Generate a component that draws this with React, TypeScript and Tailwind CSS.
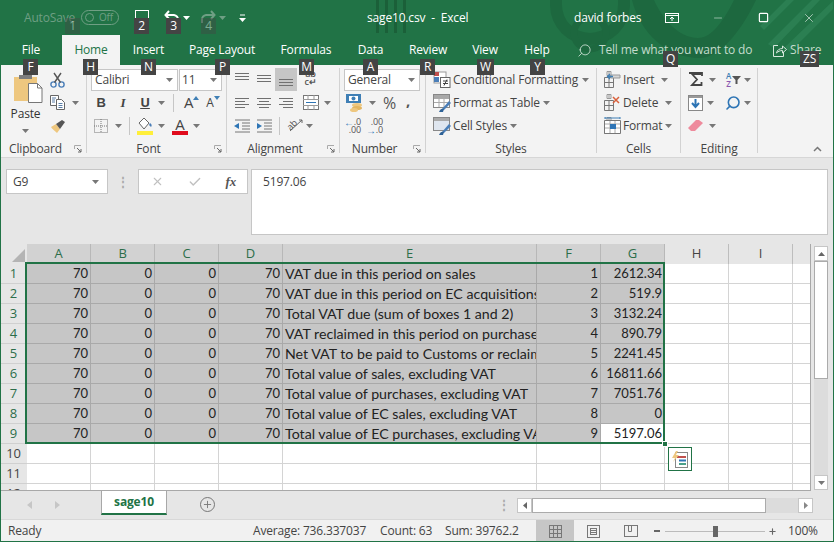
import React from "react";
import { X, Check, Search, Minus, Square, Plus } from "lucide-react";

const LABEL = "font-['Open_Sans',sans-serif] tracking-[-0.17px]";

const colHeads = [
  { t: "A", sel: true },
  { t: "B", sel: true },
  { t: "C", sel: true },
  { t: "D", sel: true },
  { t: "E", sel: true },
  { t: "F", sel: true },
  { t: "G", sel: true },
  { t: "H", sel: false },
  { t: "I", sel: false },
  { t: "", sel: false },
];

const rows = [
  ["VAT due in this period on sales", "1", "2612.34"],
  ["VAT due in this period on EC acquisitions", "2", "519.9"],
  ["Total VAT due (sum of boxes 1 and 2)", "3", "3132.24"],
  ["VAT reclaimed in this period on purchases", "4", "890.79"],
  ["Net VAT to be paid to Customs or reclaimed", "5", "2241.45"],
  ["Total value of sales, excluding VAT", "6", "16811.66"],
  ["Total value of purchases, excluding VAT", "7", "7051.76"],
  ["Total value of EC sales, excluding VAT", "8", "0"],
  ["Total value of EC purchases, excluding VAT", "9", "5197.06"],
];

const GRID = "grid grid-cols-[27px_64px_64px_64px_64px_254px_64px_64px_64px_64px_18px]";

function Caret({ className = "" }: { className?: string }) {
  return (
    <svg width="7" height="4" viewBox="0 0 7 4" className={className}>
      <path d="M0 0h7L3.5 4z" fill="#777" />
    </svg>
  );
}

// each line is [from, to], three pixels apart, starting at y
function Lines({ rows, y = 0, color = "#707070" }: { rows: [number, number][]; y?: number; color?: string }) {
  return (
    <svg width="16" height="13" viewBox="0 0 16 13">
      {rows.map(([a, b], i) => (
        <rect key={i} x={a} y={y + i * 3} width={b - a} height="1" fill={color} />
      ))}
    </svg>
  );
}

function Launcher() {
  return (
    <svg width="8" height="8" viewBox="0 0 8 8" className="absolute right-[4px] bottom-0">
      <path d="M.5 4V.5H7" fill="none" stroke="#aaa" />
      <path d="M3 3l4 4M7 4v3H4" fill="none" stroke="#666" />
    </svg>
  );
}

function Group({
  w,
  label,
  launcher,
  children,
}: {
  w: string;
  label: string;
  launcher?: boolean;
  children: React.ReactNode;
}) {
  return (
    <div className={`${w} relative flex flex-col shrink-0 mt-[3px] mb-[4px] border-r border-[#d2d2d2]`}>
      <div className="h-[73px] shrink-0">{children}</div>
      <div
        className={`h-[16px] shrink-0 flex items-center justify-center text-[12px] text-[#444] ${launcher ? "pr-[16px]" : ""}`}
      >
        {label}
      </div>
      {launcher && <Launcher />}
    </div>
  );
}

function Row({ className = "", children }: { className?: string; children: React.ReactNode }) {
  return <div className={`h-[23px] flex items-center ${className}`}>{children}</div>;
}

function PasteIcon() {
  return (
    <svg width="29" height="28" viewBox="0 0 29 28">
      <rect x="0" y="2" width="23" height="24" fill="#eec77f" />
      <rect x="5" y="0" width="13" height="4" fill="#7d7d7d" />
      <path d="M14.5 8.5h9l4.5 4.5v14.5h-13.5z" fill="#fff" stroke="#777" />
      <path d="M23.5 8.5V13H28" fill="none" stroke="#777" />
    </svg>
  );
}

function Scissors() {
  return (
    <svg width="16" height="16" viewBox="0 0 16 16">
      <circle cx="3.5" cy="12.5" r="2.6" fill="none" stroke="#4a7eb8" strokeWidth="1.4" />
      <circle cx="11.5" cy="12.5" r="2.6" fill="none" stroke="#4a7eb8" strokeWidth="1.4" />
      <path d="M4.5 10.5L11 1M10.5 10.5L4 1" stroke="#555" strokeWidth="1.4" />
    </svg>
  );
}

function CopyIcon() {
  return (
    <svg width="16" height="15" viewBox="0 0 16 15" fill="none" stroke="#666">
      <path d="M.5.5h8v10h-8z" fill="#fff" />
      <path d="M6.5 4.5h5l3 3v7h-8z" fill="#fff" />
      <path d="M2 3h4M2 5h3M2 7h3M8.5 8.5h4M8.5 10.5h4M8.5 12.5h4" stroke="#5a7fa8" />
    </svg>
  );
}

function Brush() {
  return (
    <svg width="16" height="14" viewBox="0 0 16 14">
      <path d="M1 8l5-3 4 5-3 4C5 12 2 10 1 8z" fill="#eec77f" />
      <path d="M6 5l6-4 3 2-5 7z" fill="#555" />
    </svg>
  );
}

function BorderIcon() {
  return (
    <svg width="14" height="14" viewBox="0 0 14 14" fill="none" stroke="#777" strokeDasharray="1 1">
      <rect x=".5" y=".5" width="13" height="13" />
      <path d="M7 0v14M0 7h14" />
    </svg>
  );
}

function FillIcon() {
  return (
    <svg width="16" height="18" viewBox="0 0 16 18">
      <path d="M2 6l5-5 5 5-5 6z" fill="#fff" stroke="#666" />
      <path d="M13 6c2 1 2 3 1 4l-2-2z" fill="#4a7eb8" />
      <rect x="0" y="14" width="16" height="4" fill="#ffef3a" />
    </svg>
  );
}

function FontColor() {
  return (
    <div className="relative w-[16px] h-[18px] flex flex-col items-center">
      <span className="text-[15px] leading-[14px] text-[#444]">A</span>
      <span className="absolute bottom-0 w-[16px] h-[4px] bg-[#e00b1c]" />
    </div>
  );
}

function Money() {
  return (
    <svg width="17" height="18" viewBox="0 0 17 18">
      <rect x="0" y="0" width="15" height="9" fill="#3f7fb5" />
      <rect x="3" y="2" width="9" height="5" fill="#fff" />
      <circle cx="7.5" cy="4.5" r="2" fill="#3f7fb5" />
      <ellipse cx="11" cy="11" rx="5" ry="2" fill="#eec77f" />
      <ellipse cx="11" cy="14" rx="5" ry="2" fill="#e4b661" />
      <ellipse cx="8" cy="16" rx="4" ry="2" fill="#eec77f" />
    </svg>
  );
}

function CondFmt() {
  return (
    <svg width="18" height="17" viewBox="0 0 18 17">
      <rect x="1" y="1" width="12" height="11" fill="#fff" stroke="#999" />
      <rect x="1" y="1" width="5" height="4" fill="#c0504d" />
      <rect x="1" y="6" width="5" height="5" fill="#4a7eb8" />
      <rect x="7.5" y="6.5" width="9.5" height="10" fill="#fff" stroke="#666" />
      <path d="M10 10h5M10 12.5h5M14 8.5l-3 6" stroke="#444" fill="none" />
    </svg>
  );
}

function TableFmt({ light }: { light?: boolean }) {
  return (
    <svg width="19" height="18" viewBox="0 0 19 18">
      <rect x=".5" y=".5" width="16" height="13" fill={light ? "#dfe6ef" : "#fff"} stroke="#888" />
      {!light && <path d="M1 4.5h15M1 8.5h15M6 1v12M11 1v12" stroke="#aaa" />}
      <rect x="1" y="1" width="15" height="3" fill="#a9a9a9" />
      <path d="M9 15l7-8 2 2-7 7z" fill="#4a7eb8" />
      <path d="M6 18c1-3 3-4 5-3l-1 3z" fill="#2e6296" />
    </svg>
  );
}

function CellsIcon({ kind }: { kind: "insert" | "delete" | "format" }) {
  return (
    <svg width="17" height="17" viewBox="0 0 17 17" fill="none">
      <path d="M.5 6.5h9v10h-9zM.5 11.5h9M5 6.5v10" stroke="#777" />
      <path d="M3 .5h4v4H3zM5 0v5" stroke="#999" />
      {kind === "insert" && (
        <>
          <path d="M7 4h9v3H7z" fill="#d6d6d6" stroke="#999" />
          <path d="M9 5.5H4M6 3L3.5 5.5 6 8" stroke="#3f7fb5" strokeWidth="1.3" />
        </>
      )}
      {kind === "delete" && <path d="M9 3l6 6M15 3l-6 6" stroke="#d9603b" strokeWidth="1.5" />}
      {kind === "format" && (
        <>
          <path d="M.5 3.5h16v13H.5z" fill="#fff" stroke="#777" />
          <path d="M1 7h15M1 11h15M6 4v12M11 4v12" stroke="#aaa" />
          <rect x="6" y="7" width="6" height="5" fill="#2f75b5" />
          <path d="M1 1h15M1 0v2M16 0v2" stroke="#3f7fb5" />
        </>
      )}
    </svg>
  );
}

function Sigma() {
  return (
    <svg width="15" height="15" viewBox="0 0 15 15">
      <path d="M1 1h13v3M13 2H4l5 5.5L4 13h9.5V10" fill="none" stroke="#444" strokeWidth="1.8" />
    </svg>
  );
}

function SortFilter() {
  return (
    <div className="flex items-center">
      <div className="flex flex-col items-center text-[8px] leading-[8px] font-semibold">
        <span className="text-[#3f7fb5]">A</span>
        <span className="text-[#8a57b0]">Z</span>
      </div>
      <svg width="9" height="8" viewBox="0 0 9 8" className="ml-[1px]">
        <path d="M0 0h9L5.5 4v4h-2V4z" fill="#555" />
      </svg>
    </div>
  );
}

function FillDown() {
  return (
    <svg width="15" height="16" viewBox="0 0 15 16">
      <rect x=".5" y=".5" width="14" height="15" fill="#fff" stroke="#888" />
      <rect x="1" y="1" width="13" height="2" fill="#999" />
      <path d="M7.5 4v7M4 8l3.5 4L11 8" fill="none" stroke="#2e75b5" strokeWidth="2" />
    </svg>
  );
}

function Eraser() {
  return (
    <svg width="15" height="13" viewBox="0 0 15 13">
      <path d="M0 9l8-8h3l4 3-8 8H3z" fill="#ee8a9c" />
    </svg>
  );
}

function Wrap() {
  return (
    <div className="flex flex-col items-center text-[9px] leading-[8px] text-[#555] font-semibold mb-[4px]">
      <span>ab</span>
      <span>c↵</span>
    </div>
  );
}

function Ribbon() {
  return (
    <div className={`h-[93px] flex bg-[#f3f3f3] border-b border-[#d6d6d6] pl-[1px] ${LABEL}`}>
      <Group w="w-[86px]" label="Clipboard" launcher>
        <div className="flex">
          <div className="w-[49px] flex flex-col items-center pt-[7px]">
            <span className="ml-[5px]"><PasteIcon /></span>
            <span className="text-[12px] leading-[16px] text-[#333] mt-[3px]">Paste</span>
            <Caret className="mt-[7px]" />
          </div>
          <div className="flex flex-col">
            <Row><Scissors /></Row>
            <Row>
              <CopyIcon />
              <Caret className="ml-[6px]" />
            </Row>
            <Row><Brush /></Row>
          </div>
        </div>
      </Group>

      <Group w="w-[140px]" label="Font" launcher>
        <div className="pl-[4px] h-[23px] flex gap-[1px] pt-[1px]">
          <div className="w-[87px] h-[22px] bg-white border border-[#c6c6c6] flex items-center justify-between pl-[3px] pr-[4px] text-[12px] text-[#444]">
            Calibri
            <Caret />
          </div>
          <div className="w-[43px] h-[22px] bg-white border border-[#c6c6c6] flex items-center justify-between pl-[2px] pr-[4px] text-[12px] text-[#444]">
            11
            <Caret />
          </div>
        </div>
        <Row className="pl-[6px] text-[#444] text-[13px]">
          <span className="w-[16px] text-center font-bold font-['Liberation_Sans',sans-serif]">B</span>
          <span className="w-[16px] ml-[6px] text-center italic font-['Liberation_Serif',serif] font-bold">I</span>
          <span className="w-[16px] ml-[6px] text-center underline font-bold">U</span>
          <Caret className="ml-[5px]" />
          <span className="w-px h-[18px] bg-[#c6c6c6] ml-[8px]" />
          <span className="text-[15px] ml-[10px]">A</span>
          <svg width="6" height="4" viewBox="0 0 6 4" className="mb-[9px]"><path d="M0 4l3-4 3 4z" fill="#3f7fb5" /></svg>
          <span className="text-[12px] ml-[7px]">A</span>
          <svg width="6" height="4" viewBox="0 0 6 4" className="mb-[9px]"><path d="M0 0l3 4 3-4z" fill="#3f7fb5" /></svg>
        </Row>
        <Row className="pl-[7px]">
          <BorderIcon />
          <Caret className="ml-[7px]" />
          <span className="w-px h-[18px] bg-[#c6c6c6] ml-[7px]" />
          <span className="ml-[7px]"><FillIcon /></span>
          <Caret className="ml-[5px]" />
          <span className="ml-[7px]"><FontColor /></span>
          <Caret className="ml-[5px]" />
        </Row>
      </Group>

      <Group w="w-[113px]" label="Alignment" launcher>
        <Row className="pl-[7px]">
          <Lines rows={[[1, 15], [1, 15], [1, 15]]} y={0} />
          <span className="ml-[6px]"><Lines rows={[[1, 15], [1, 15], [1, 15]]} y={2} /></span>
          <span className="w-[22px] h-[23px] ml-[3px] bg-[#c6c6c6] flex items-center justify-center">
            <Lines rows={[[1, 15], [1, 15], [1, 15]]} y={6} />
          </span>
          <span className="ml-[5px] w-[17px] flex justify-center"><Wrap /></span>
        </Row>
        <Row className="pl-[7px]">
          <Lines rows={[[1, 15], [1, 11], [1, 15], [1, 11]]} y={2} />
          <span className="ml-[6px]"><Lines rows={[[1, 15], [3, 13], [1, 15], [3, 13]]} y={2} /></span>
          <span className="ml-[6px]"><Lines rows={[[1, 15], [5, 15], [1, 15], [5, 15]]} y={2} /></span>
          <svg width="16" height="15" viewBox="0 0 16 15" className="ml-[9px]" fill="none">
            <rect x=".5" y=".5" width="15" height="14" fill="#fff" stroke="#777" />
            <path d="M0 4.5h16M0 10.5h16M5 0v4M11 0v4M5 11v4M11 11v4" stroke="#999" />
            <path d="M3 7.5h10" stroke="#2e75b5" />
          </svg>
          <Caret className="ml-[5px]" />
        </Row>
        <Row className="pl-[7px]">
          <svg width="16" height="14" viewBox="0 0 16 14">
            <path d="M1 1h15M8 4h8M8 7h8M8 10h8M1 13h15" stroke="#777" />
            <path d="M0 7l5-3v6z" fill="#2e75b5" />
          </svg>
          <svg width="16" height="14" viewBox="0 0 16 14" className="ml-[6px]">
            <path d="M1 1h15M8 4h8M8 7h8M8 10h8M1 13h15" stroke="#777" />
            <path d="M6 7L1 4v6z" fill="#2e75b5" />
          </svg>
          <span className="w-px h-[18px] bg-[#c6c6c6] ml-[7px]" />
          <svg width="17" height="17" viewBox="0 0 17 17" className="ml-[7px]" fill="none">
            <path d="M3 14L15 3M12 3h3v3" stroke="#666" />
            <text x="0" y="11" fontSize="9" fill="#555" transform="rotate(-45 5 8)">ab</text>
          </svg>
          <Caret className="ml-[2px]" />
        </Row>
      </Group>

      <Group w="w-[86px]" label="Number" launcher>
        <div className="pl-[4px] h-[23px] pt-[1px]">
          <div className="w-[76px] h-[22px] bg-white border border-[#c6c6c6] flex items-center justify-between pl-[3px] pr-[4px] text-[12px] text-[#444]">
            General
            <Caret />
          </div>
        </div>
        <Row className="pl-[6px] text-[#555]">
          <Money />
          <Caret className="ml-[6px]" />
          <span className="text-[16px] ml-[7px]">%</span>
          <span className="text-[15px] font-bold ml-[10px] mb-[4px]">,</span>
        </Row>
        <Row className="pl-[6px] text-[9px] leading-[8px] text-[#555]">
          <div className="w-[15px] flex flex-col items-end">
            <span className="flex items-center"><span className="text-[#2e75b5] text-[10px] leading-[8px]">←</span>.0</span>
            <span>.00</span>
          </div>
          <div className="w-[15px] ml-[7px] flex flex-col items-end">
            <span>.00</span>
            <span className="flex items-center"><span className="text-[#2e75b5] text-[10px] leading-[8px]">→</span>.0</span>
          </div>
        </Row>
      </Group>

      <Group w="w-[171px]" label="Styles">
        <div className="pl-[7px] text-[12px] text-[#444]">
          <Row>
            <CondFmt />
            <span className="ml-[2px]">Conditional Formatting</span>
            <Caret className="ml-[4px]" />
          </Row>
          <Row>
            <TableFmt />
            <span className="ml-[1px]">Format as Table</span>
            <Caret className="ml-[3px]" />
          </Row>
          <Row>
            <TableFmt light />
            <span className="ml-[1px]">Cell Styles</span>
            <Caret className="ml-[3px]" />
          </Row>
        </div>
      </Group>

      <Group w="w-[84px]" label="Cells">
        <div className="pl-[7px] text-[12px] text-[#444]">
          <Row>
            <CellsIcon kind="insert" />
            <span className="ml-[2px] w-[35px]">Insert</span>
            <Caret className="ml-[3px]" />
          </Row>
          <Row>
            <CellsIcon kind="delete" />
            <span className="ml-[2px] w-[39px]">Delete</span>
            <Caret className="ml-[3px]" />
          </Row>
          <Row>
            <CellsIcon kind="format" />
            <span className="ml-[2px]">Format</span>
            <Caret className="ml-[3px]" />
          </Row>
        </div>
      </Group>

      <Group w="w-[77px]" label="Editing">
        <Row className="pl-[7px]">
          <Sigma />
          <Caret className="ml-[6px]" />
          <span className="ml-[10px]"><SortFilter /></span>
          <Caret className="ml-[3px]" />
        </Row>
        <Row className="pl-[7px]">
          <FillDown />
          <Caret className="ml-[4px]" />
          <Search size={16} strokeWidth={2.4} className="ml-[11px] text-[#2e75b5] -scale-x-100" />
          <Caret className="ml-[3px]" />
        </Row>
        <Row className="pl-[7px]">
          <Eraser />
          <Caret className="ml-[6px]" />
        </Row>
      </Group>

      <div className="flex-1 relative">
        <svg width="9" height="6" viewBox="0 0 9 6" className="absolute right-[12px] bottom-[5px]" fill="none">
          <path d="M1 5l3.5-3.5L8 5" stroke="#777" strokeWidth="1.5" />
        </svg>
      </div>
    </div>
  );
}

const tabs = [
  { t: "File", w: "w-[62px]", c: "" },
  { t: "Home", w: "w-[58px]", c: "bg-[#f3f3f3] text-[#217346]" },
  { t: "Insert", w: "w-[57px]", c: "" },
  { t: "Page Layout", w: "w-[90px]", c: "" },
  { t: "Formulas", w: "w-[78px]", c: "" },
  { t: "Data", w: "w-[51px]", c: "" },
  { t: "Review", w: "w-[64px]", c: "" },
  { t: "View", w: "w-[50px]", c: "" },
  { t: "Help", w: "w-[54px]", c: "" },
];

const keyTips = [
  { t: "F", c: "left-[23px] top-[59px] w-[15px]" },
  { t: "H", c: "left-[83px] top-[59px] w-[15px]" },
  { t: "N", c: "left-[141px] top-[59px] w-[15px]" },
  { t: "P", c: "left-[215px] top-[59px] w-[15px]" },
  { t: "M", c: "left-[299px] top-[59px] w-[15px]" },
  { t: "A", c: "left-[363px] top-[59px] w-[15px]" },
  { t: "R", c: "left-[420px] top-[59px] w-[15px]" },
  { t: "W", c: "left-[477px] top-[59px] w-[17px]" },
  { t: "Y", c: "left-[530px] top-[59px] w-[15px]" },
  { t: "Q", c: "left-[663px] top-[51px] w-[15px]" },
  { t: "ZS", c: "left-[800px] top-[51px] w-[19px]" },
  { t: "1", c: "left-[65px] top-[18px] w-[15px] opacity-40" },
  { t: "2", c: "left-[134px] top-[18px] w-[15px]" },
  { t: "3", c: "left-[166px] top-[18px] w-[15px]" },
  { t: "4", c: "left-[201px] top-[18px] w-[15px] opacity-40" },
];

function TitleBar() {
  return (
    <div className={`relative h-[65px] bg-[#217346] text-white text-[12px] ${LABEL}`}>
      <svg width="834" height="65" viewBox="0 0 834 65" className="absolute left-0 top-0">
        <path d="M376 0h3v33h-3zM385 0h3v33h-3zM394 0h3v33h-3zM403 0h3v33h-3z" fill="#1b6039" />
        <path d="M550 0v5a40 40 0 0 0 80 0V0h-12v5a28 28 0 0 1-56 0V0z" fill="#1d683f" />
        <circle cx="590" cy="33" r="16" fill="none" stroke="#1d683f" strokeWidth="7" />
        <path d="M632 0c8 32 34 58 68 58 18 0 40-24 56-58h-22c-10 20-22 38-36 38-20 0-36-20-44-38z" fill="#1d683f" />
        <path d="M768 44L812 0h8l-46 48zM784 48L834 0v8l-44 44zM760 26L786 0h8l-30 30z" fill="#2b7f52" />
      </svg>
      <div className="relative h-[35px] flex items-center whitespace-nowrap">
        <div className="w-[24px] shrink-0" />
        <span className="w-[57px] shrink-0 text-[#6f9f84]">AutoSave</span>
        <div className="w-[38px] h-[15px] shrink-0 rounded-full border border-[#6f9f84] flex items-center pl-[3px] gap-[5px] text-[10px] text-[#6f9f84]">
          <span className="w-[9px] h-[9px] rounded-full border border-[#6f9f84]" />
          Off
        </div>
        <div className="w-[16px] shrink-0" />
        <div className="w-[14px] h-[14px] shrink-0 border-[1.5px] border-white mb-[2px]" />
        <div className="w-[15px] shrink-0" />
        <svg width="16" height="14" viewBox="0 0 16 14" fill="none" className="mb-[2px] shrink-0">
          <path d="M2 5h8a4.5 4.5 0 0 1 4 5v3M5 1L1.5 5 5 9" stroke="#fff" strokeWidth="2" />
        </svg>
        <Caret className="ml-[3px] shrink-0 [&_path]:fill-white" />
        <svg width="16" height="14" viewBox="0 0 16 14" fill="none" className="ml-[10px] mb-[2px] shrink-0">
          <path d="M14 5H6a4.5 4.5 0 0 0-4 5v3M11 1l3.5 4L11 9" stroke="#6f9f84" strokeWidth="2" />
        </svg>
        <Caret className="ml-[3px] shrink-0 [&_path]:fill-[#6f9f84]" />
        <svg width="7" height="8" viewBox="0 0 7 8" className="ml-[13px] shrink-0">
          <path d="M1 1h5" stroke="#fff" />
          <path d="M0 4h7L3.5 8z" fill="#fff" />
        </svg>
        <span className="ml-[121px] w-[99px] shrink-0 text-center whitespace-pre">sage10.csv  -  Excel</span>
        <span className="ml-[108px] w-[66px] shrink-0 text-center">david forbes</span>
        <svg width="14" height="10" viewBox="0 0 14 10" className="ml-[25px] shrink-0" fill="none">
          <rect x=".5" y=".5" width="13" height="9" stroke="#fff" />
          <path d="M0 2.5h14" stroke="#fff" />
          <path d="M7 8V4M5 6l2-2 2 2" stroke="#fff" />
        </svg>
        <Minus size={12} strokeWidth={1} className="ml-[33px] shrink-0" />
        <Square size={11} strokeWidth={1.2} className="ml-[34px] shrink-0" absoluteStrokeWidth />
        <X size={14} strokeWidth={1} className="ml-[33px] shrink-0" />
      </div>
      <div className="relative h-[30px] flex items-center whitespace-nowrap">
        {tabs.map((t) => (
          <div key={t.t} className={`${t.w} ${t.c} h-[30px] shrink-0 flex items-center justify-center`}>
            {t.t}
          </div>
        ))}
        <Search size={15} strokeWidth={1.3} className="ml-[13px] -scale-x-100 text-[#d8e8de] shrink-0" />
        <span className="ml-[7px] w-[151px] shrink-0 text-[#c4dccd]">Tell me what you want to do</span>
        <svg width="14" height="13" viewBox="0 0 14 13" fill="none" className="ml-[23px] shrink-0" stroke="#d8e8de">
          <path d="M5 1.5H.5v11h10V8" />
          <path d="M3.5 9c.5-3 3-4.5 6-4.5V2l4 3.5-4 3.5V6.5c-2.500 0-4.500 1-6 2.500z" />
        </svg>
        <span className="ml-[3px] text-[#c4dccd]">Share</span>
      </div>
    </div>
  );
}

function FormulaBar() {
  return (
    <div className={`h-[86px] bg-[#e6e6e6] flex pt-[11px] pl-[6px] text-[12px] text-[#444] ${LABEL}`}>
      <div className="w-[102px] h-[25px] bg-white border border-[#c6c6c6] flex items-center justify-between pl-[6px] pr-[8px]">
        G9
        <Caret />
      </div>
      <div className="w-[30px] h-[25px] flex items-center justify-center text-[#aaa] font-bold">⋮</div>
      <div className="w-[110px] h-[25px] bg-white border border-[#c6c6c6] flex items-center justify-between pl-[12px] pr-[11px]">
        <X size={13} className="text-[#c0c0c0]" strokeWidth={2} />
        <Check size={14} className="text-[#c0c0c0]" strokeWidth={2.4} />
        <span className="font-['Liberation_Serif',serif] italic font-bold text-[#555] text-[13px]">fx</span>
      </div>
      <div className="ml-[3px] w-[577px] h-[66px] bg-white border border-[#c6c6c6] pl-[11px] pt-[3px] text-[12px]">5197.06</div>
    </div>
  );
}

function Sheet() {
  return (
    <div className="relative h-[247px] flex overflow-hidden font-['Lato',sans-serif] text-[14.2px] text-[#222] bg-[#e6e6e6]">
      <div className="w-[811px] shrink-0 border-r border-b border-[#a8a8a8] overflow-hidden bg-white">
        <div className={GRID}>
          <div className="h-[20px] bg-[#e6e6e6] flex items-end justify-end pr-[2px] pb-[2px]">
            <svg width="13" height="13" viewBox="0 0 13 13"><path d="M0 13L13 0v13z" fill="#b4b4b4" /></svg>
          </div>
          {colHeads.map((c, i) => (
            <div
              key={i}
              className={`h-[20px] flex items-center justify-center border-r text-[13px] ${LABEL} ${
                c.sel
                  ? "bg-[#d2d2d2] text-[#2d6e4a] border-[#b8b8b8]"
                  : "bg-[#e6e6e6] text-[#444] border-[#bdbdbd]"
              }`}
            >
              {c.t}
            </div>
          ))}
          {rows.map((r, i) => (
            <React.Fragment key={i}>
              <div className={`h-[20px] bg-[#e6e6e6] flex items-center justify-center border-b border-[#d0d0d0] text-[13px] text-[#2d6e4a] ${LABEL}`}>
                {i + 1}
              </div>
              {["70", "0", "0", "70"].map((v, j) => (
                <div key={j} className="h-[20px] bg-[#c6c6c6] border-r border-b border-[#a9a9a9] flex items-center justify-end pr-[2px] text-[13px]">
                  {v}
                </div>
              ))}
              <div className="h-[20px] bg-[#c6c6c6] border-r border-b border-[#a9a9a9] flex items-center pl-[2px] overflow-hidden whitespace-nowrap">
                {r[0]}
              </div>
              <div className="h-[20px] bg-[#c6c6c6] border-r border-b border-[#a9a9a9] flex items-center justify-end pr-[2px] text-[13px]">
                {r[1]}
              </div>
              <div className={`h-[20px] border-b flex items-center justify-end pr-[3px] text-[13px] ${i === 8 ? "bg-white border-white" : "bg-[#c6c6c6] border-[#a9a9a9]"}`}>
                {r[2]}
              </div>
              <div className="h-[20px] bg-white border-r border-b border-[#d4d4d4]" />
              <div className="h-[20px] bg-white border-r border-b border-[#d4d4d4]" />
              <div className="h-[20px] bg-white border-b border-[#d4d4d4]" />
            </React.Fragment>
          ))}
          {[10, 11, 12].map((n) => (
            <React.Fragment key={n}>
              <div className={`h-[20px] bg-[#e6e6e6] flex items-center justify-center border-b border-[#d0d0d0] text-[13px] text-[#444] ${LABEL}`}>
                {n}
              </div>
              {Array.from({ length: 9 }).map((_, j) => (
                <div key={j} className="h-[20px] bg-white border-r border-b border-[#d4d4d4]" />
              ))}
              <div className="h-[20px] bg-white border-b border-[#d4d4d4]" />
            </React.Fragment>
          ))}
        </div>
      </div>

      <div className="flex-1 flex flex-col items-center pt-[2px] pb-[1px] pr-[3px]">
        <div className="w-[14px] h-[15px] bg-white border border-[#c6c6c6] flex items-center justify-center">
          <svg width="7" height="4" viewBox="0 0 7 4"><path d="M0 4h7L3.5 0z" fill="#666" /></svg>
        </div>
        <div className="w-[14px] h-[118px] bg-white border border-[#ababab]" />
        <div className="w-[14px] flex-1 bg-[#dcdcdc]" />
        <div className="w-[14px] h-[15px] bg-white border border-[#c6c6c6] flex items-center justify-center">
          <Caret />
        </div>
      </div>

      {/* selection outline, fill handle and quick analysis sit over the cells */}
      <div className="absolute left-[25px] top-[18px] w-[640px] h-[182px] border-2 border-[#217346]" />
      <div className="absolute left-[662px] top-[197px] w-[4px] h-[4px] bg-[#217346] border border-white box-content" />
      <div className="absolute left-[668px] top-[203px] w-[24px] h-[24px] bg-white border border-[#217346] flex items-center justify-center">
        <svg width="16" height="17" viewBox="0 0 16 17">
          <rect x="3.5" y="1.5" width="12" height="15" fill="#fff" stroke="#888" />
          <path d="M5 6h9" stroke="#c0504d" strokeWidth="2" />
          <path d="M7 9.5h7" stroke="#2e75b5" strokeWidth="2" />
          <path d="M7 13h7" stroke="#4aa08a" strokeWidth="2" />
          <path d="M4 0L0 7h3L1 11l6-7H4l2-4z" fill="#eec77f" />
        </svg>
      </div>
    </div>
  );
}

function TabBar() {
  return (
    <div className={`h-[28px] bg-[#e6e6e6] flex items-start text-[12px] ${LABEL}`}>
      <div className="w-[101px] h-[27px] flex items-center justify-center gap-[23px] pr-[14px]">
        <svg width="5" height="8" viewBox="0 0 5 8"><path d="M5 0v8L0 4z" fill="#c6c6c6" /></svg>
        <svg width="5" height="8" viewBox="0 0 5 8"><path d="M0 0v8l5-4z" fill="#c6c6c6" /></svg>
      </div>
      <div className="w-[66px] h-[25px] bg-white border-x border-[#a8a8a8] border-b-2 border-b-[#217346] flex items-center justify-center font-bold text-[#217346] -mt-px">
        sage10
      </div>
      <div className="ml-[33px] mt-[6px] w-[15px] h-[15px] rounded-full border border-[#777] flex items-center justify-center">
        <Plus size={11} strokeWidth={2} className="text-[#777]" />
      </div>
      <div className="ml-[285px] mt-[6px] text-[#aaa] w-[8px] h-[15px] flex items-center justify-center font-bold">⋮</div>
      <div className="ml-[9px] mt-[7px] w-[296px] h-[15px] flex">
        <div className="w-[15px] h-[15px] bg-white border border-[#c6c6c6] flex items-center justify-center">
          <svg width="4" height="7" viewBox="0 0 4 7"><path d="M4 0v7L0 3.5z" fill="#666" /></svg>
        </div>
        <div className="w-[234px] h-[15px] bg-white border border-[#ababab]" />
        <div className="flex-1 bg-[#dcdcdc]" />
        <div className="w-[15px] h-[15px] bg-white border border-[#c6c6c6] flex items-center justify-center">
          <svg width="4" height="7" viewBox="0 0 4 7"><path d="M0 0v7l4-3.5z" fill="#888" /></svg>
        </div>
      </div>
    </div>
  );
}

function StatusBar() {
  return (
    <div className={`h-[23px] bg-[#f1f1f1] border-t border-[#d8d8d8] flex items-center text-[12px] text-[#444] whitespace-nowrap ${LABEL}`}>
      <span className="ml-[8px] w-[245px] shrink-0">Ready</span>
      <span className="w-[127px] shrink-0">Average: 736.337037</span>
      <span className="w-[65px] shrink-0">Count: 63</span>
      <span className="w-[91px] shrink-0">Sum: 39762.2</span>
      <div className="w-[38px] h-[22px] shrink-0 bg-[#c6c6c6] flex items-center justify-center">
        <svg width="13" height="13" viewBox="0 0 13 13" fill="none" stroke="#777">
          <rect x=".5" y=".5" width="12" height="12" />
          <path d="M4.500 0v13M8.500 0v13M0 4.500h13M0 8.500h13" />
        </svg>
      </div>
      <div className="w-[38px] shrink-0 flex items-center justify-center">
        <svg width="13" height="13" viewBox="0 0 13 13" fill="none" stroke="#777">
          <rect x=".5" y=".5" width="12" height="12" />
          <rect x="3.5" y="3.5" width="6" height="6" />
          <path d="M4 5.5h5M4 7.5h5" />
        </svg>
      </div>
      <div className="w-[38px] shrink-0 flex items-center justify-center">
        <svg width="14" height="12" viewBox="0 0 14 12" fill="none" stroke="#777">
          <rect x=".5" y=".5" width="13" height="11" />
          <path d="M7.500 0v6.500h-3V0" />
        </svg>
      </div>
      <div className="ml-[4px] w-[6px] h-[2px] shrink-0 bg-[#666]" />
      <div className="relative ml-[5px] w-[100px] h-px shrink-0 bg-[#bbb]">
        <div className="absolute left-[48px] -top-[5px] w-[5px] h-[11px] bg-[#666]" />
      </div>
      <Plus size={9} strokeWidth={3} className="ml-[3px] shrink-0 text-[#666]" />
      <span className="ml-[11px]">100%</span>
    </div>
  );
}

export default function App() {
  return (
    <div className="relative w-[834px] h-[542px] overflow-hidden bg-[#e6e6e6]">
      <TitleBar />
      <Ribbon />
      <FormulaBar />
      <Sheet />
      <TabBar />
      <StatusBar />
      {keyTips.map((k) => (
        <div
          key={k.t}
          className={`absolute ${k.c} h-[16px] bg-[#444] text-white text-[12px] flex items-center justify-center ${LABEL}`}
        >
          {k.t}
        </div>
      ))}
      <div className="absolute inset-0 border-x border-b border-[#217346] pointer-events-none" />
    </div>
  );
}
